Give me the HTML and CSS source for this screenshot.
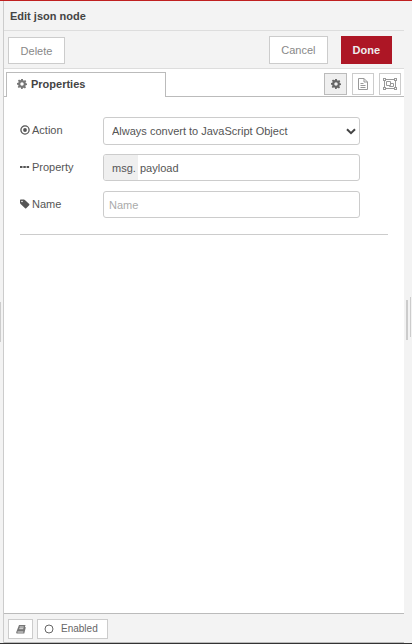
FILE: index.html
```html
<!DOCTYPE html>
<html lang="en">
<head>
<meta charset="utf-8">
<title>Edit json node</title>
<link rel="stylesheet" href="styles.css">
</head>
<body>
<div class="workspace">
  <div class="gutter gutter-left"><span class="handle"></span></div>
  <form class="tray">
    <h1 class="tray-header">Edit json node</h1>
    <div class="toolbar">
      <button type="button" class="button">Delete</button>
      <span class="spacer"></span>
      <button type="button" class="button button-tall">Cancel</button>
      <button type="button" class="button button-tall button-primary">Done</button>
    </div>
    <div class="tabs">
      <a class="tab" href="#properties">
        <svg class="icon-gear" viewBox="0 0 20 20" width="10" height="10"><use href="#gear"/></svg>
        Properties
      </a>
      <div class="tab-buttons">
        <button type="button" class="icon-button selected" aria-label="Properties">
          <svg viewBox="0 0 20 20" width="10" height="10">
            <path id="gear" fill="currentColor" fill-rule="evenodd" d="M8.300 0h3.400l.5 2.700 1.800.8 2.300-1.600 2.300 2.400-1.600 2.200.8 1.900 2.200.4v3.300l-2.700.5-.7 1.800 1.500 2.200-2.300 2.400-2.200-1.600-1.900.8-.4 1.800H8.300l-.5-2.600-1.800-.8-2.200 1.600-2.400-2.400L3 13.600l-.8-1.900L0 11.300V8l2.600-.4.8-1.900-1.600-2.200 2.300-2.300 2.200 1.500 1.600-.7zM10 6.500a3.500 3.500 0 1 0 0 7 3.500 3.500 0 0 0 0-7z"/>
          </svg>
        </button>
        <button type="button" class="icon-button" aria-label="Description">
          <svg viewBox="0 0 10 12" width="10" height="12" fill="none" stroke="currentColor">
            <path d="M.5.5h5.500l3.500 3.500v7.500h-9zM6 .5V4h3.500M2.500 5.500h3M2.500 7.500h5M2.500 9.500h5"/>
          </svg>
        </button>
        <button type="button" class="icon-button" aria-label="Appearance">
          <svg viewBox="0 0 14 12" width="14" height="12" fill="none" stroke="currentColor">
            <path d="M1.500 1.500h11v9h-11zM3.500 3.500h4v4h-4zM7.500 5.500h3v3h-4v-1"/>
            <path fill="currentColor" stroke="none" d="M0 0h3v3H0zM11 0h3v3h-3zM0 9h3v3H0zM11 9h3v3h-3z"/>
            <path stroke="none" fill="#fff" d="M1 1h1v1H1zM12 1h1v1h-1zM1 10h1v1H1zM12 10h1v1h-1z"/>
          </svg>
        </button>
      </div>
    </div>
    <div class="content" id="properties">
      <div class="row row-select">
        <label for="action">
          <svg viewBox="0 0 10 10" width="10" height="10"><circle cx="5" cy="5" r="4.100" fill="none" stroke="currentColor" stroke-width="1.300"/><circle cx="5" cy="5" r="1.900" fill="currentColor"/></svg>
          Action
        </label>
        <div class="select-wrap">
          <select id="action" class="field">
            <option>Always convert to JavaScript Object</option>
          </select>
          <svg class="chevron" viewBox="0 0 10 7" width="10" height="7"><path d="M1 1.200l4 4 4-4" fill="none" stroke="currentColor" stroke-width="2"/></svg>
        </div>
      </div>
      <div class="row">
        <label for="property">
          <svg viewBox="0 0 10 10" width="10" height="10"><path fill="currentColor" d="M0 4h2.500v2H0zM3.300 4h2.500v2H3.300zM6.600 4h2.500v2H6.600z"/></svg>
          Property
        </label>
        <div class="field typed">
          <button type="button" class="type">msg.</button>
          <input id="property" type="text" value="payload">
        </div>
      </div>
      <div class="row">
        <label for="name">
          <svg viewBox="0 0 10 10" width="10" height="10"><path fill="currentColor" fill-rule="evenodd" d="M0 1.200Q0 .5.700.5h3.200q.6 0 1 .4l4.300 4.200q.5.600 0 1.100L6.200 9.300q-.6.500-1.100 0L.6 5Q0 4.400 0 3.800zM2 1.700a.8.8 0 1 0 0 1.600.8.8 0 0 0 0-1.600z"/></svg>
          Name
        </label>
        <input id="name" class="field" type="text" placeholder="Name">
      </div>
      <hr>
    </div>
    <div class="footer">
      <button type="button" class="small-button help" aria-label="Node help">
        <svg viewBox="0 0 10 9" width="10" height="9"><path fill="currentColor" d="M3 0h6.500L8.900 2l.9.200L8.300 8.500H1Q0 8.500.2 7.300z"/><path d="M3.700 2h4M3.300 3.700h4M1.500 7h5.800" stroke="#fff" stroke-width=".8"/></svg>
      </button>
      <button type="button" class="small-button enabled">
        <svg viewBox="0 0 10 10" width="10" height="10"><circle cx="5" cy="5" r="4" fill="none" stroke="currentColor"/></svg>
        Enabled
      </button>
    </div>
  </form>
  <div class="gutter gutter-right"><span class="handle"></span><span class="handle handle-outer"></span></div>
</div>
</body>
</html>
```
FILE: styles.css
```css
* {
  box-sizing: border-box;
}

body {
  margin: 0;
  background: #f3f3f3;
  color: #555;
  font: 11px/16px "Liberation Sans", Arial, sans-serif;
}

button, input, select {
  margin: 0;
  font: inherit;
  color: inherit;
}

svg {
  display: block;
  flex: none;
}

.workspace {
  display: flex;
  min-height: 100vh;
  border-top: 1px solid #c02020;
  border-bottom: 1px solid #333;
}

.gutter {
  display: flex;
  align-items: center;
}

.gutter-left {
  width: 4px;
  border-right: 1px solid #ccc;
}

.gutter-right {
  width: 8px;
  gap: 2px;
  padding: 0 0 4px 2px;
}

.handle {
  width: 2px;
  height: 40px;
  background: #ccc;
}

.gutter-left .handle,
.handle-outer {
  width: 1px;
}

.handle-outer {
  margin-bottom: 6px;
}

.tray {
  flex: 1;
  min-width: 0;
  display: flex;
  flex-direction: column;
  background: #fff;
}

.tray-header {
  margin: 0;
  padding: 7px 6px 6px;
  background: #f3f3f3;
  border-bottom: 1px solid #ddd;
  color: #444;
  font-size: 11px;
  font-weight: bold;
}

.toolbar {
  display: flex;
  align-items: flex-end;
  padding: 5px 12px 4px 4px;
  background: #f3f3f3;
  border-bottom: 1px solid #ddd;
}

.spacer {
  flex: 1;
}

.button {
  min-width: 57px;
  height: 27px;
  padding: 0 11px;
  background: #fff;
  border: 1px solid #ccc;
  color: #888;
}

.button-tall {
  min-width: 51px;
  height: 28px;
}

.button-primary {
  margin-left: 13px;
  padding: 0 11px;
  background: #ad1625;
  border-color: #ad1625;
  color: #eee;
  font-weight: bold;
}

.tabs {
  display: flex;
  justify-content: space-between;
  height: 28px;
  padding: 3px 3px 0 2px;
  border-bottom: 1px solid #bbb;
}

.tab {
  display: flex;
  align-items: center;
  gap: 4px;
  width: 160px;
  height: 25px;
  padding: 0 10px 2px;
  background: #fff;
  border: 1px solid #bbb;
  border-bottom: 0;
  color: #444;
  font-weight: bold;
  text-decoration: none;
}

.icon-gear {
  color: #777;
}

.tab-buttons {
  display: flex;
  gap: 5px;
  padding-top: 1px;
}

.icon-button {
  display: flex;
  align-items: center;
  justify-content: center;
  width: 22px;
  height: 22px;
  padding: 0;
  background: #fff;
  border: 1px solid #ccc;
  color: #999;
}

.icon-button.selected {
  width: 23px;
  background: #efefef;
  border-color: #bbb;
  color: #666;
}

.content {
  flex: 1;
  padding: 20px 16px;
}

.row {
  display: flex;
  align-items: center;
  height: 27px;
  margin: 0 28px 10px 0;
}

.row-select {
  height: 28px;
  margin-bottom: 9px;
}

.row label {
  display: flex;
  align-items: center;
  gap: 2px;
  width: 83px;
  padding-bottom: 2px;
}

.field {
  flex: 1;
  min-width: 0;
  width: 100%;
  height: 100%;
  padding: 0 5px;
  background: #fff;
  border: 1px solid #ccc;
  border-radius: 3px;
}

.select-wrap {
  position: relative;
  flex: 1;
  height: 100%;
}

select.field {
  appearance: none;
  padding: 0 20px 0 8px;
}

.chevron {
  position: absolute;
  top: 11px;
  right: 4px;
  color: #444;
  pointer-events: none;
}

.typed {
  display: flex;
  padding: 0;
  overflow: hidden;
}

.type {
  width: 34px;
  padding: 1px 0 0 8px;
  background: #efefef;
  border: 0;
  text-align: left;
}

.typed input {
  flex: 1;
  min-width: 0;
  padding: 1px 2px 0;
  background: none;
  border: 0;
}

.field::placeholder {
  color: #aaa;
}

hr {
  margin: 16px 0 0;
  border: 0;
  border-top: 1px solid #ccc;
}

.footer {
  display: flex;
  gap: 4px;
  padding: 5px 4px 3px;
  background: #f3f3f3;
  border-top: 1px solid #bbb;
  border-bottom: 1px solid #bbb;
}

.small-button {
  display: flex;
  align-items: center;
  gap: 7px;
  height: 20px;
  background: #fff;
  border: 1px solid #ccc;
  color: #777;
  font-size: 10px;
}

.help {
  justify-content: center;
  width: 25px;
  padding: 0;
}

.enabled {
  padding: 0 9px 0 6px;
  color: #666;
}
```
